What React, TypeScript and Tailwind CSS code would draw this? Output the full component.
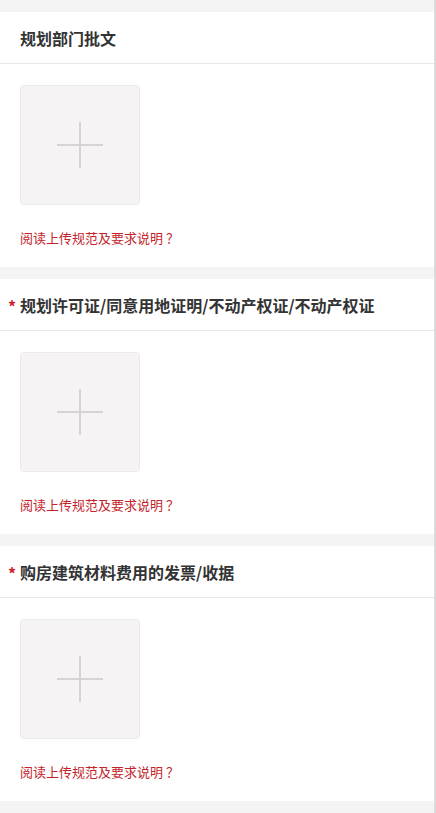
const sections = [
  { title: '规划部门批文', required: false },
  { title: '规划许可证/同意用地证明/不动产权证/不动产权证', required: true },
  { title: '购房建筑材料费用的发票/收据', required: true },
];

function UploadBox() {
  return (
    <div className="w-[120px] h-[120px] rounded-[4px] border border-[#ebe9e9] bg-[#f5f3f3] flex items-center justify-center">
      <svg width="46" height="46" viewBox="0 0 46 46">
        <rect x="0" y="22" width="46" height="2" fill="#d6d4d4" />
        <rect x="22" y="0" width="2" height="46" fill="#d6d4d4" />
      </svg>
    </div>
  );
}

export default function App() {
  return (
    <div
      className="w-[436px] h-[813px] bg-[#f4f4f4] pt-3 border-r-2 border-[#dcdcdc] overflow-hidden"
      style={{ fontFamily: '"Microsoft YaHei", "Noto Sans CJK SC", sans-serif' }}
    >
      <div className="flex flex-col gap-3">
        {sections.map((s) => (
          <div key={s.title} className="bg-white">
            <div className="h-[52px] flex items-center px-5 border-b border-[#e8e8e8]">
              {s.required && (
                <span className="-ml-3 w-3 text-[#d0202a] text-[16px] font-bold leading-[20px] pt-[3px]">*</span>
              )}
              <span className="text-[16px] font-bold text-[#333333]">{s.title}</span>
            </div>
            <div className="px-5 pt-[21px] pb-[22px]">
              <UploadBox />
              <p className="mt-[26px] text-[13px] leading-[14px] text-[#c4232b]">
                阅读上传规范及要求说明<span className="ml-[3px]">？</span>
              </p>
            </div>
          </div>
        ))}
      </div>
    </div>
  );
}
